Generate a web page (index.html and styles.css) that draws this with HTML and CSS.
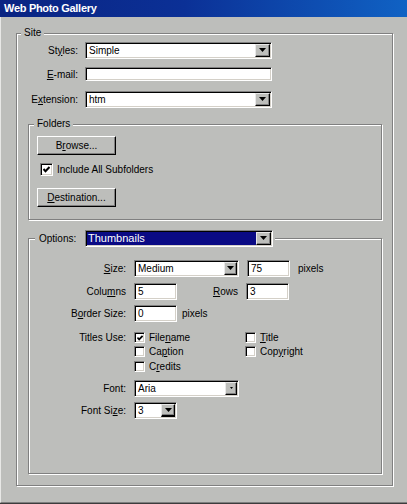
FILE: index.html
```html
<!DOCTYPE html>
<html>
<head>
<meta charset="utf-8">
<title>Web Photo Gallery</title>
<link rel="stylesheet" href="styles.css">
</head>
<body>
<div class="window">
  <div class="titlebar">Web Photo Gallery</div>
  <div class="client">
    <div class="group site">
      <span class="legend">Site</span>

      <div class="srow r-styles">
        <span class="slbl">St<u>y</u>les:</span>
        <div class="select s-styles"><span class="val">Simple</span><span class="btn"><svg width="7" height="4" viewBox="0 0 7 4"><polygon points="0,0 7,0 3.5,4" fill="#000"/></svg></span></div>
      </div>
      <div class="srow r-email">
        <span class="slbl"><u>E</u>-mail:</span>
        <div class="input i-email"><span class="val"></span></div>
      </div>
      <div class="srow r-ext">
        <span class="slbl">E<u>x</u>tension:</span>
        <div class="select s-styles"><span class="val">htm</span><span class="btn"><svg width="7" height="4" viewBox="0 0 7 4"><polygon points="0,0 7,0 3.5,4" fill="#000"/></svg></span></div>
      </div>

      <div class="group folders">
        <span class="legend lg-folders">Folders</span>
        <div class="button">B<u>r</u>owse...</div>
        <div class="checkrow">
          <span class="cb"><svg width="7" height="7" viewBox="0 0 7 7"><polyline points="0.5,3 2.5,5.2 6.5,1" fill="none" stroke="#000" stroke-width="2"/></svg></span>
          <span>Include All Subfolders</span>
        </div>
        <div class="button b-dest"><u>D</u>estination...</div>
      </div>

      <div class="group options">
        <div class="legend lg-options">
          <span class="olbl">Options:</span>
          <div class="select s-thumbs"><span class="val sel">Thumbnails</span><span class="btn"><svg width="7" height="4" viewBox="0 0 7 4"><polygon points="0,0 7,0 3.5,4" fill="#000"/></svg></span></div>
        </div>

        <div class="orow r-size">
          <span class="olabel"><u>S</u>ize:</span>
          <div class="ctrls">
            <div class="select s-medium"><span class="val">Medium</span><span class="btn b13"><svg width="7" height="4" viewBox="0 0 7 4"><polygon points="0,0 7,0 3.5,4" fill="#000"/></svg></span></div>
            <div class="input i-num gap8"><span class="val">75</span></div>
            <span class="unit gap8">pixels</span>
          </div>
        </div>
        <div class="orow r-cols">
          <span class="olabel">Colu<u>m</u>ns</span>
          <div class="ctrls">
            <div class="input i-num"><span class="val">5</span></div>
            <span class="rows-lbl"><u>R</u>ows</span>
            <div class="input i-num"><span class="val">3</span></div>
          </div>
        </div>
        <div class="orow r-border">
          <span class="olabel">B<u>o</u>rder Size:</span>
          <div class="ctrls">
            <div class="input i-num"><span class="val">0</span></div>
            <span class="unit gap5">pixels</span>
          </div>
        </div>
        <div class="orow r-titles">
          <span class="olabel">Titles Use:</span>
          <div class="checks">
            <div class="citem"><span class="cb sm"><svg width="7" height="7" viewBox="0 0 7 7"><polyline points="0.5,3 2.5,5.2 6.5,1" fill="none" stroke="#000" stroke-width="2"/></svg></span><span>File<u>n</u>ame</span></div>
            <div class="citem"><span class="cb sm"></span><span><u>T</u>itle</span></div>
            <div class="citem"><span class="cb sm"></span><span>Ca<u>p</u>tion</span></div>
            <div class="citem"><span class="cb sm"></span><span>Cop<u>y</u>right</span></div>
            <div class="citem"><span class="cb sm"></span><span>C<u>r</u>edits</span></div>
          </div>
        </div>
        <div class="orow r-font">
          <span class="olabel">Font:</span>
          <div class="ctrls">
            <div class="select s-font"><span class="val">Aria</span><span class="btn b12"><svg width="3" height="2" viewBox="0 0 3 2"><polygon points="0,0 3,0 1.5,2" fill="#000"/></svg></span></div>
          </div>
        </div>
        <div class="orow r-fsize">
          <span class="olabel">Font Si<u>z</u>e:</span>
          <div class="ctrls">
            <div class="select s-fsize"><span class="val">3</span><span class="btn b14"><svg width="7" height="4" viewBox="0 0 7 4"><polygon points="0,0 7,0 3.5,4" fill="#000"/></svg></span></div>
          </div>
        </div>
      </div>
    </div>
  </div>
</div>
</body>
</html>
```
FILE: styles.css
```css
* { box-sizing: border-box; }

body {
  margin: 0;
  font-family: "Liberation Sans", Arial, sans-serif;
  font-size: 10px;
  color: #000;
  background: #bdbebb;
}

u { text-decoration: underline; text-underline-offset: 1px; }

.window {
  width: 407px;
  height: 504px;
  background: #bdbebb;
  border-bottom: 1px solid #3c3c3c;
  overflow: hidden;
}

.titlebar {
  height: 17px;
  background: linear-gradient(to right, #0a2482 0%, #0b3096 45%, #1062c4 100%);
  color: #fff;
  font-weight: bold;
  font-size: 11px;
  line-height: 17px;
  padding-left: 4px;
  letter-spacing: -0.3px;
}

.client {
  height: 486px;
  border-left: 1px solid #e8e8e6;
  border-bottom: 1px solid #7e7e7e;
  padding-top: 16px;
}

/* etched group box */
.group {
  position: relative;
  border: 1px solid #808080;
  box-shadow: inset 1px 1px 0 #fff, 1px 1px 0 #fff;
}

.legend {
  position: absolute;
  top: -7px;
  left: 4px;
  padding: 0 3px;
  line-height: 12px;
  background: #bdbebb;
}

.site {
  margin-left: 15px;
  width: 377px;
  height: 453px;
  padding-top: 8px;
}

/* Site rows */
.srow {
  display: flex;
  align-items: center;
}
.slbl {
  width: 61px;
  margin-right: 7px;
  text-align: right;
  white-space: nowrap;
}
.r-styles { height: 17px; }
.r-email { height: 14px; margin-top: 8px; }
.r-ext { height: 17px; margin-top: 10px; }

/* controls */
.select, .input {
  display: flex;
  height: 17px;
  background: #fff;
  border-style: solid;
  border-width: 1px;
  border-color: #808080 #fff #fff #808080;
  box-shadow: inset 1px 1px 0 #000, inset -1px -1px 0 #d4d0c8;
  padding: 1px 1px 1px 1px;
}
.val {
  flex: 1;
  padding-left: 2px;
  line-height: 13px;
  white-space: nowrap;
  overflow: hidden;
}
.val.sel {
  background: #0a0a84;
  color: #fff;
  font-size: 11px;
  padding-left: 1px;
}
.btn {
  width: 15px;
  height: 13px;
  background: #bdbebb;
  border-style: solid;
  border-width: 1px;
  border-color: #e8e8e8 #000 #000 #e8e8e8;
  box-shadow: inset -1px -1px 0 #808080;
  display: flex;
  align-items: center;
  justify-content: center;
  padding-bottom: 1px;
}
.btn svg { display: block; }
.btn.b13 { width: 13px; }
.btn.b12 { width: 12px; }
.btn.b14 { width: 14px; border-bottom-width: 2px; }

.s-styles { width: 187px; }
.i-email { width: 187px; height: 14px; }
.s-thumbs { width: 188px; }
.s-medium { width: 105px; }
.s-font { width: 105px; }
.s-fsize { width: 43px; }
.i-num { width: 43px; }

/* buttons */
.button {
  width: 79px;
  height: 19px;
  line-height: 17px;
  text-align: center;
  background: #bdbebb;
  border-style: solid;
  border-width: 1px;
  border-color: #fff #000 #000 #fff;
  box-shadow: inset -1px -1px 0 #808080;
}
.b-dest { margin-top: 12px; }

/* checkboxes */
.cb {
  display: flex;
  align-items: center;
  justify-content: center;
  width: 13px;
  height: 13px;
  background: #fff;
  border-style: solid;
  border-width: 1px;
  border-color: #808080 #fff #fff #808080;
  box-shadow: inset 1px 1px 0 #000, inset -1px -1px 0 #d4d0c8;
  flex: none;
}
.cb.sm { width: 11px; height: 11px; }
.cb.sm svg { width: 6px; height: 6px; }

.checkrow {
  display: flex;
  align-items: center;
  height: 13px;
  margin-top: 8px;
  margin-left: 3px;
  gap: 4px;
}

/* Folders */
.folders {
  margin-top: 16px;
  margin-left: 11px;
  width: 354px;
  height: 96px;
  padding: 11px 0 0 8px;
}
.lg-folders { left: 5px; padding: 0 3px; }

/* Options */
.options {
  margin-top: 18px;
  margin-left: 11px;
  width: 354px;
  height: 236px;
  padding-top: 21px;
}
.lg-options {
  top: -9px;
  left: 6px;
  height: 17px;
  padding: 0 2px 0 4px;
  display: flex;
  align-items: center;
}
.olbl { width: 46px; }

.orow {
  display: grid;
  grid-template-columns: 97px auto;
  column-gap: 8px;
  align-items: center;
  height: 17px;
}
.olabel { text-align: right; white-space: nowrap; }
.ctrls { display: flex; align-items: center; }
.gap8 { margin-left: 8px; }
.gap5 { margin-left: 5px; }
.rows-lbl { width: 61px; text-align: right; margin-right: 8px; }

.r-cols { margin-top: 6px; }
.r-border { margin-top: 5px; }
.r-titles {
  margin-top: 10px;
  height: 41px;
  align-items: start;
}
.r-titles .olabel { line-height: 11px; }
.checks {
  display: grid;
  grid-template-columns: 111px auto;
  grid-template-rows: 14px 15px 12px;
}
.citem {
  display: flex;
  align-items: flex-start;
  gap: 4px;
  line-height: 11px;
  white-space: nowrap;
}
.r-font { margin-top: 7px; }
.r-fsize { margin-top: 5px; }
```
